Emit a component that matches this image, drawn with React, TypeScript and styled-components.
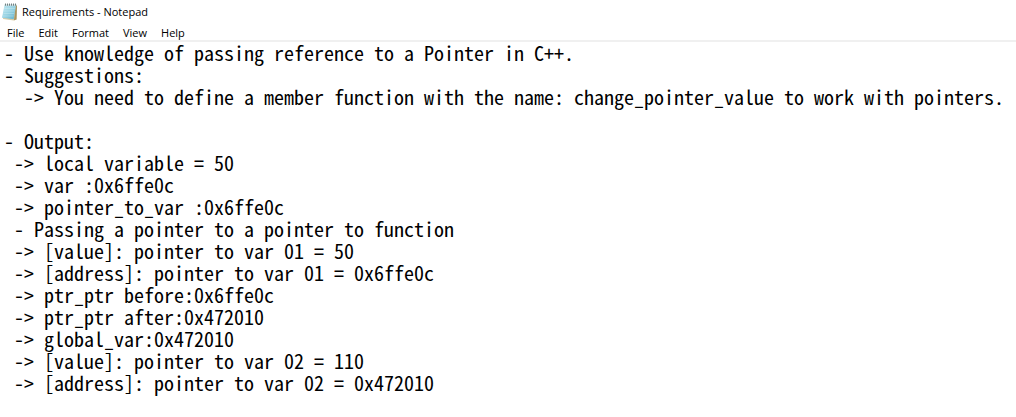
import React from "react";
import styled, { createGlobalStyle } from "styled-components";

const GlobalStyle = createGlobalStyle`
  * { box-sizing: border-box; }
  body { margin: 0; background: #fff; color: #000; }
`;

const Window = styled.main`
  display: flex;
  flex-direction: column;
  min-height: 100vh;
  background: #fff;
  font-family: "Open Sans", "Noto Sans", sans-serif;
`;

const TitleBar = styled.header`
  display: flex;
  align-items: center;
  gap: 3px;
  height: 23px;
  padding-left: 1px;
`;

const Title = styled.h1`
  margin: 0;
  font-size: 11px;
  line-height: 16px;
  font-weight: 400;
`;

const MenuBar = styled.nav`
  display: flex;
  height: 19px;
  padding-top: 2px;
  border-bottom: 2px solid #f0f0f0;
`;

const MenuButton = styled.button`
  padding: 0 7px;
  border: 0;
  background: transparent;
  color: #000;
  font: 400 11px/15px "Open Sans", "Noto Sans", sans-serif;
`;

const Editor = styled.textarea`
  flex: 1;
  display: block;
  width: 100%;
  margin: 0;
  padding: 0 0 0 4px;
  border: 0;
  outline: 0;
  resize: none;
  overflow: hidden;
  white-space: pre;
  background: #fff;
  color: #000;
  font: 400 20px/22px "Noto Sans Mono CJK SC", "Liberation Mono", monospace;
`;

const MENUS = ["File", "Edit", "Format", "View", "Help"];

const DOCUMENT = [
  "- Use knowledge of passing reference to a Pointer in C++.",
  "- Suggestions:",
  "  -> You need to define a member function with the name: change_pointer_value to work with pointers.",
  "",
  "- Output:",
  " -> local variable = 50",
  " -> var :0x6ffe0c",
  " -> pointer_to_var :0x6ffe0c",
  " - Passing a pointer to a pointer to function",
  " -> [value]: pointer to var 01 = 50",
  " -> [address]: pointer to var 01 = 0x6ffe0c",
  " -> ptr_ptr before:0x6ffe0c",
  " -> ptr_ptr after:0x472010",
  " -> global_var:0x472010",
  " -> [value]: pointer to var 02 = 110",
  " -> [address]: pointer to var 02 = 0x472010",
].join("\n");

const NotepadIcon = () => (
  <svg width="18" height="20" viewBox="0 0 18 20" aria-hidden="true">
    <defs>
      <linearGradient id="page" x1="0" y1="0" x2="1" y2="1">
        <stop offset="0" stopColor="#c4e9f2" />
        <stop offset="0.5" stopColor="#98d3e3" />
        <stop offset="1" stopColor="#5db0cb" />
      </linearGradient>
    </defs>
    <path d="M4 3 16 3 15.5 17.5 13 18.5 2 17Z" fill="#d8cba6" />
    <path d="M14.7 3.5H16L15.5 17.5 13 18.3Z" fill="#a8935f" />
    <path d="M3.5 3H15L12.7 17.2 1 15.7Z" fill="url(#page)" />
    <path d="M3.4 6.5H14M3 9H13.5M2.5 11.5H13M2 14H12.5" stroke="#e6f6f9" strokeWidth="0.5" opacity="0.6" />
    <path d="M3.5 3H15.5" stroke="#d5dfe0" strokeWidth="1.4" />
    <path d="M4.5 1.5V3.7M6.5 1.5V3.7M8.5 1.5V3.7M10.5 1.5V3.7M12.5 1.5V3.7M14.5 1.5V3.7" stroke="#53686b" strokeWidth="0.8" />
  </svg>
);

export default function App() {
  return (
    <Window>
      <GlobalStyle />
      <TitleBar>
        <NotepadIcon />
        <Title>Requirements - Notepad</Title>
      </TitleBar>
      <MenuBar aria-label="Application menu">
        {MENUS.map((menu) => (
          <MenuButton key={menu} type="button">{menu}</MenuButton>
        ))}
      </MenuBar>
      <Editor aria-label="Document text" defaultValue={DOCUMENT} spellCheck={false} />
    </Window>
  );
}
